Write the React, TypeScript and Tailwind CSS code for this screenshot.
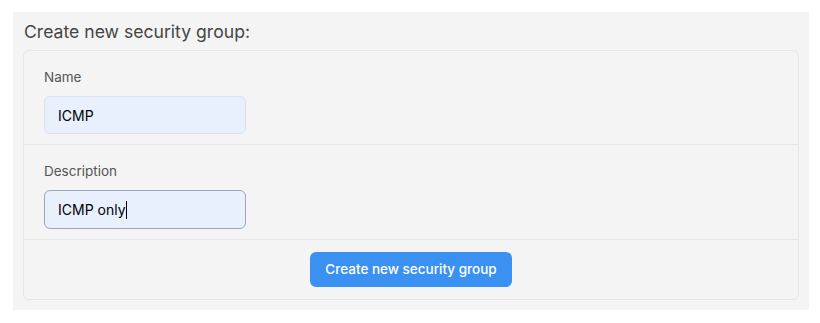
import React from "react";

const App: React.FC = () => {
  return (
    <div className="bg-white w-[820px] h-[323px] pt-3 pl-[13px] font-['Inter',sans-serif]">
      <div className="w-[796px] h-[298px] bg-[#f4f4f4] px-[10px] pt-[8px]">
        <h2 className="text-[17.6px] leading-[24px] text-[#444] pl-[1px]">Create new security group:</h2>
        <div className="mt-[6px] border border-[#e6e6e6] rounded-[6px]">
          <div className="pt-[17px] pb-[10px] px-5 border-b border-[#e6e6e6]">
            <label className="block text-[13.5px] leading-[18px] text-[#555]">Name</label>
            <input
              type="text"
              defaultValue="ICMP"
              className="mt-[10px] w-[202px] h-[38px] rounded-[6px] border border-[#d8e0ec] bg-[#e8f0fe] px-[13px] text-[14px] text-black outline-none"
            />
          </div>
          <div className="pt-[17px] pb-[10px] px-5 border-b border-[#e6e6e6]">
            <label className="block text-[13.5px] leading-[18px] text-[#555]">Description</label>
            <div className="mt-[10px] w-[202px] h-[39px] rounded-[6px] border border-[#9ba6b6] bg-[#e8f0fe] px-[13px] text-[14px] text-black flex items-center">
              ICMP only<span className="inline-block w-px h-[18px] bg-black" />
            </div>
          </div>
          <div className="flex justify-center py-3">
            <button className="h-[35px] w-[202px] rounded-[6px] bg-[#3b91f2] text-white text-[13.5px] font-medium">
              Create new security group
            </button>
          </div>
        </div>
      </div>
    </div>
  );
};

export default App;
